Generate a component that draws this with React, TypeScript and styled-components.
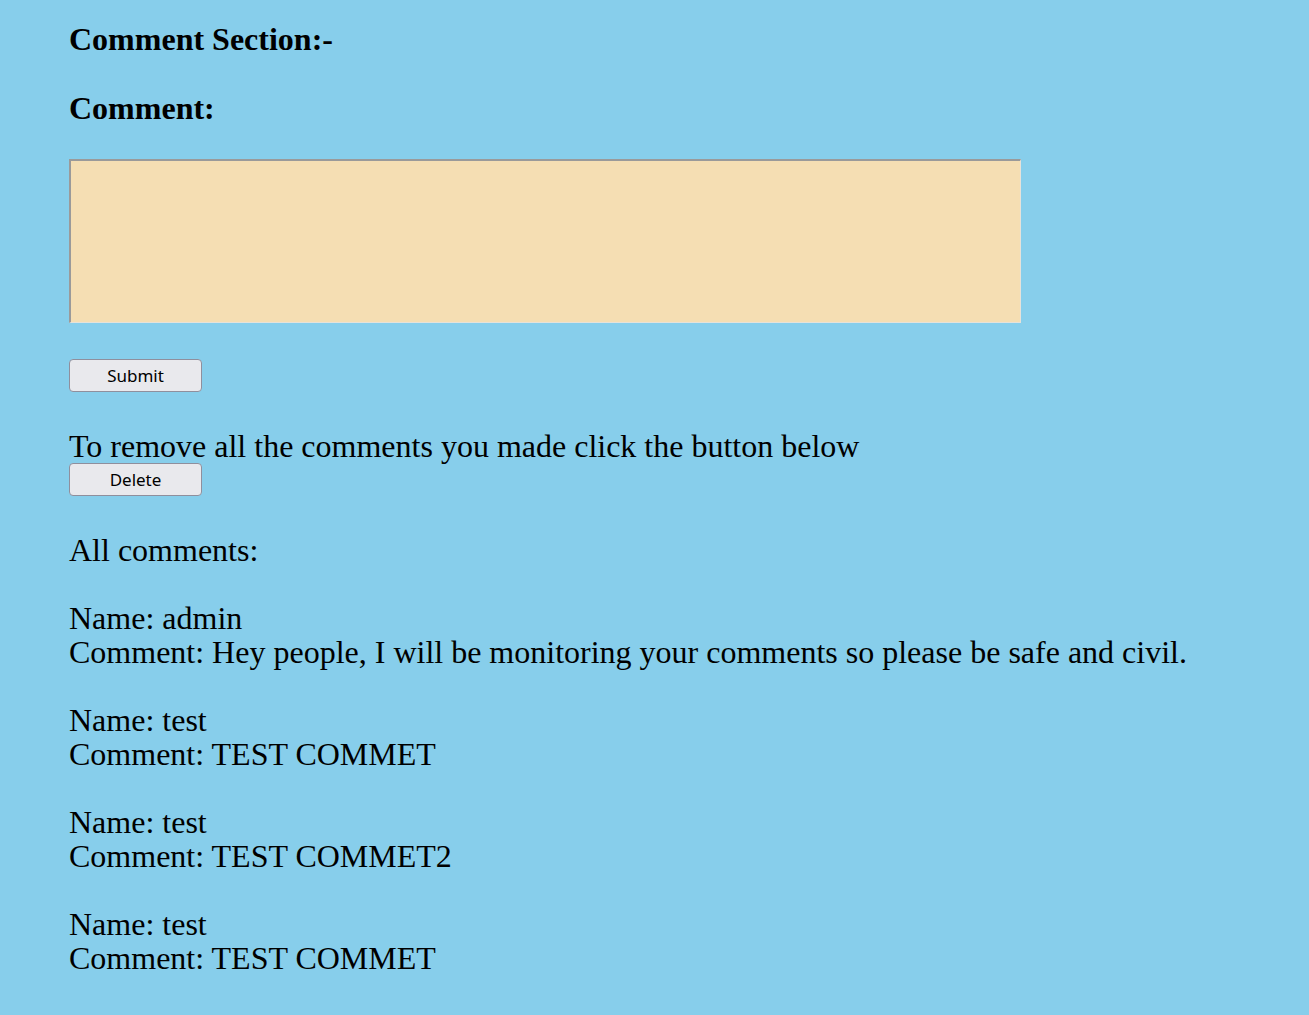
import React from "react";
import styled, { createGlobalStyle } from "styled-components";

const Global = createGlobalStyle`
  html, body {
    margin: 0;
    padding: 0;
    background: #87ceeb;
  }
  body {
    font-family: "Liberation Serif", "Times New Roman", serif;
    color: #000;
  }
`;

const Page = styled.main`
  display: flex;
  flex-direction: column;
  align-items: flex-start;
  padding: 21px 0 40px 69px;
  min-height: 1015px;
  box-sizing: border-box;
`;

const Heading = styled.h2<{ $gap: number }>`
  margin: 0 0 ${(p) => p.$gap}px 0;
  font-size: 32px;
  line-height: 37px;
  font-weight: bold;
`;

const CommentBox = styled.textarea`
  box-sizing: border-box;
  width: 952px;
  height: 164px;
  margin: 0 0 36px 0;
  background: #f5deb3;
  border-style: solid;
  border-width: 2px 1px 1px 2px;
  border-color: #9a9a9a #e6e2da #e6e2da #9a9a9a;
  resize: none;
  outline: none;
`;

const Button = styled.button<{ $gap: number }>`
  box-sizing: border-box;
  width: 133px;
  height: 33px;
  margin: 0 0 ${(p) => p.$gap}px 0;
  padding: 0;
  background: #e9e9ed;
  border: 1px solid #8f8f9d;
  border-radius: 4px;
  font-family: "Noto Sans", "Open Sans", sans-serif;
  font-size: 17px;
  line-height: 20px;
  color: #000;
`;

const Line = styled.div<{ $gap?: number }>`
  font-size: 32px;
  line-height: 34px;
  margin: 0 0 ${(p) => p.$gap ?? 0}px 0;
  white-space: nowrap;
`;

const Entry = styled.div`
  display: flex;
  flex-direction: column;
  margin-bottom: 34px;
`;

const comments = [
  { name: "admin", text: "Hey people, I will be monitoring your comments so please be safe and civil." },
  { name: "test", text: "TEST COMMET" },
  { name: "test", text: "TEST COMMET2" },
  { name: "test", text: "TEST COMMET" },
];

export default function App() {
  return (
    <>
      <Global />
      <Page>
        <Heading $gap={32}>Comment Section:-</Heading>
        <Heading $gap={32}>Comment:</Heading>
        <CommentBox />
        <Button $gap={37}>Submit</Button>
        <Line>To remove all the comments you made click the button below</Line>
        <Button $gap={37}>Delete</Button>
        <Line $gap={34}>All comments:</Line>
        {comments.map((c, i) => (
          <Entry key={i}>
            <Line>Name: {c.name}</Line>
            <Line>Comment: {c.text}</Line>
          </Entry>
        ))}
      </Page>
    </>
  );
}
